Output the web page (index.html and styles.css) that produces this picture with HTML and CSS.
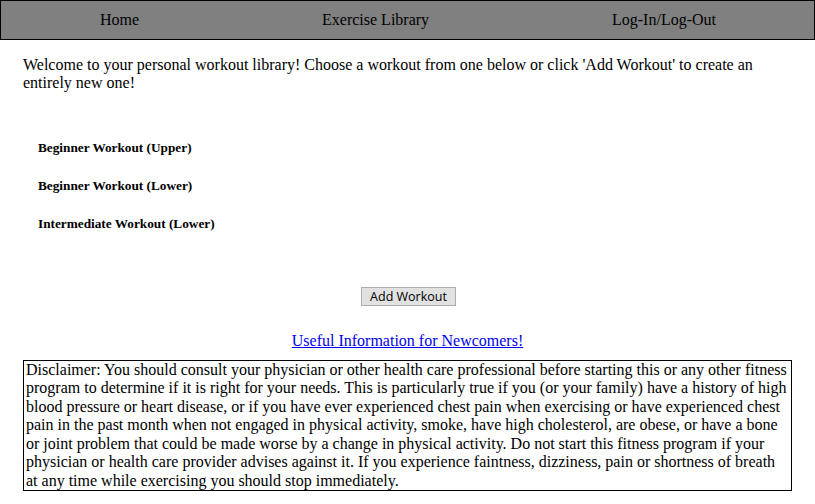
FILE: index.html
```html
<!DOCTYPE html>
<html>
<head>
<meta charset="utf-8">
<title>Workout Library</title>
<link rel="stylesheet" href="styles.css">
</head>
<body>
<nav class="nav">
  <a class="nav-item">Home</a>
  <a class="nav-item">Exercise Library</a>
  <a class="nav-item">Log-In/Log-Out</a>
</nav>
<main class="main">
  <p class="intro">Welcome to your personal workout library! Choose a workout from one below or click 'Add Workout' to create an entirely new one!</p>
  <div class="workouts">
    <h5 class="workout">Beginner Workout (Upper)</h5>
    <h5 class="workout">Beginner Workout (Lower)</h5>
    <h5 class="workout">Intermediate Workout (Lower)</h5>
  </div>
  <div class="actions">
    <button class="add-btn">Add Workout</button>
  </div>
  <div class="info">
    <a class="info-link" href="#">Useful Information for Newcomers!</a>
  </div>
  <div class="disclaimer">Disclaimer: You should consult your physician or other health care professional before starting this or any other fitness program to determine if it is right for your needs. This is particularly true if you (or your family) have a history of high blood pressure or heart disease, or if you have ever experienced chest pain when exercising or have experienced chest pain in the past month when not engaged in physical activity, smoke, have high cholesterol, are obese, or have a bone or joint problem that could be made worse by a change in physical activity. Do not start this fitness program if your physician or health care provider advises against it. If you experience faintness, dizziness, pain or shortness of breath at any time while exercising you should stop immediately.</div>
</main>
</body>
</html>
```

FILE: styles.css
```css
html, body {
  margin: 0;
  padding: 0;
  background: #ffffff;
}
body {
  font-family: "Liberation Serif", "Times New Roman", serif;
  font-size: 16px;
  color: #000;
}
.nav {
  display: flex;
  justify-content: space-between;
  align-items: center;
  height: 38px;
  padding: 0 98px 0 99px;
  background: #808080;
  border: 1px solid #000;
}
.nav-item {
  color: #000;
  text-decoration: none;
}
.main {
  padding: 0 23px;
}
.intro {
  margin: 16px 0 0 0;
}
.workouts {
  display: flex;
  flex-direction: column;
  gap: 23px;
  padding: 48px 0 0 15px;
}
.workout {
  margin: 0;
  font-size: 13.28px;
  line-height: 15px;
  font-weight: bold;
}
.actions {
  display: flex;
  justify-content: center;
  padding-top: 56px;
}
.add-btn {
  font-family: "Open Sans", "Noto Sans", sans-serif;
  font-size: 12.5px;
  line-height: 16px;
  padding: 1px 8px 0 8px;
  background: #e1e1e1;
  border: 1px solid #adadad;
  border-radius: 0;
  color: #000;
  margin-left: 2px;
}
.info {
  text-align: center;
  padding-top: 26px;
  line-height: 18.5px;
}
.info-link {
  color: #0000ee;
  text-decoration: underline;
}
.disclaimer {
  margin-top: 9px;
  border: 1px solid #000;
  padding: 0 2px;
  width: 763px;
  line-height: 18.5px;
}
```
